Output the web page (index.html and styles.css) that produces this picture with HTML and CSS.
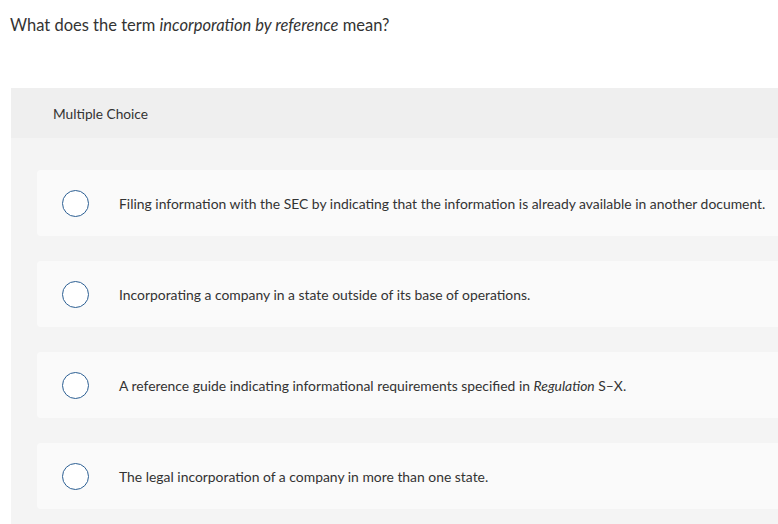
FILE: index.html
```html
<!DOCTYPE html>
<html>
<head>
<meta charset="utf-8">
<link rel="stylesheet" href="styles.css">
</head>
<body>
<p class="question">What does the term <em>incorporation by reference</em> mean?</p>
<section class="panel">
  <div class="panel-head">Multiple Choice</div>
  <div class="panel-body">
    <label class="choice"><span class="radio"></span><span class="choice-text">Filing information with the SEC by indicating that the information is already available in another document.</span></label>
    <label class="choice"><span class="radio"></span><span class="choice-text">Incorporating a company in a state outside of its base of operations.</span></label>
    <label class="choice"><span class="radio"></span><span class="choice-text">A reference guide indicating informational requirements specified in <em>Regulation</em> S–X.</span></label>
    <label class="choice"><span class="radio"></span><span class="choice-text">The legal incorporation of a company in more than one state.</span></label>
  </div>
</section>
</body>
</html>
```

FILE: styles.css
```css
html, body {
  margin: 0;
  padding: 0;
  background: #fff;
  overflow: hidden;
}
body {
  font-family: "Lato", "Open Sans", sans-serif;
  color: #333;
  width: 778px;
  height: 524px;
}
.question {
  margin: 0;
  padding: 15px 0 0 10px;
  font-size: 16.5px;
  line-height: 20px;
  color: #333;
}
.question em, .choice-text em {
  font-style: italic;
}
.panel {
  margin: 53px 0 0 11px;
  width: 800px;
  background: #f4f4f4;
}
.panel-head {
  height: 50px;
  background: #efefef;
  display: flex;
  align-items: center;
  padding-left: 42px;
  font-size: 13.7px;
  color: #333;
}
.panel-body {
  padding: 32px 0 20px 26px;
  display: flex;
  flex-direction: column;
  gap: 25px;
}
.choice {
  height: 66px;
  background: #fafafa;
  border-radius: 4px;
  display: flex;
  align-items: center;
  padding-left: 25px;
}
.radio {
  width: 25px;
  height: 25px;
  border: 1.5px solid #2c5f93;
  border-radius: 50%;
  background: #fff;
  flex: none;
}
.choice-text {
  margin-left: 30px;
  font-size: 13.9px;
  color: #333;
}
```
